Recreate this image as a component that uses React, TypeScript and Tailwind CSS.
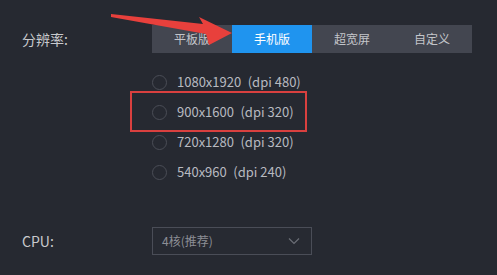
import React from "react";

const font = { fontFamily: '"Noto Sans CJK SC", "Noto Sans", sans-serif' };

export default function App() {
  const tabs = ["平板版", "手机版", "超宽屏", "自定义"];
  const options = [
    "1080x1920\u2002(dpi 480)",
    "900x1600\u2002(dpi 320)",
    "720x1280\u2002(dpi 320)",
    "540x960\u2002(dpi 240)",
  ];
  return (
    <div
      className="relative w-[497px] h-[275px] overflow-hidden bg-[#262931] pt-[25px] text-[12px]"
      style={font}
    >
      <div className="flex items-center h-[28px]">
        <div className="w-[152px] pl-[22px] text-[14px] text-[#c8c9cd]">分辨率:</div>
        <div className="flex h-[28px] bg-[#434650]">
          {tabs.map((t, i) => (
            <div
              key={t}
              className={
                i === 1
                  ? "w-[80px] flex items-center justify-center bg-[#1f94ef] text-white"
                  : "w-[80px] flex items-center justify-center text-[#c3c5ca]"
              }
            >
              {t}
            </div>
          ))}
        </div>
      </div>

      <div className="flex flex-col mt-[14px] pl-[152px]">
        {options.map((o) => (
          <div key={o} className="flex items-center h-[30px]">
            <div className="w-[15px] h-[15px] rounded-full border border-[#4a4d56]" />
            <div className="ml-[10px] text-[13px] text-[#b8bac0] whitespace-pre">{o}</div>
          </div>
        ))}
      </div>

      <div className="flex items-center mt-[40px]">
        <div className="w-[152px] pl-[22px] text-[14px] text-[#c8c9cd]">CPU:</div>
        <div className="w-[160px] h-[28px] border border-[#4a4d57] bg-[#272a32] flex items-center justify-between pl-[9px] pr-[11px] text-[#8c8e95]">
          <span>4核(推荐)</span>
          <svg width="12" height="8" viewBox="0 0 12 8" fill="none">
            <path d="M1 1.5 L6 6.5 L11 1.5" stroke="#6b6e76" strokeWidth="1.2" />
          </svg>
        </div>
      </div>

      <div className="absolute left-[130px] top-[91px] w-[177px] h-[41px] border-2 border-[#d9403f]" />

      <svg
        className="absolute left-0 top-0"
        width="497"
        height="275"
        viewBox="0 0 497 275"
      >
        <polygon
          points="111,14 203,24 199,17 232,33 209,45 206,34 111,17"
          fill="#e8403c"
        />
      </svg>
    </div>
  );
}
